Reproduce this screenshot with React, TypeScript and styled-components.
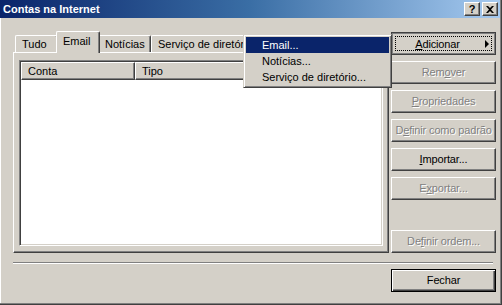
import styled, { createGlobalStyle, css } from 'styled-components';

const GlobalStyle = createGlobalStyle`
  html, body {
    margin: 0;
    padding: 0;
    background: #d4d0c8;
  }
  body {
    font-family: 'Liberation Sans', Arial, sans-serif;
    font-size: 11px;
    line-height: 13px;
    color: #000;
  }
`;

const face = '#d4d0c8';
const shadow = '#808080';
const dark = '#404040';

const Window = styled.div`
  position: relative;
  width: 502px;
  height: 305px;
  box-sizing: border-box;
  background: ${face};
  border-right: 1px solid ${dark};
  border-bottom: 1px solid ${dark};
  box-shadow: inset -1px -1px 0 ${shadow}, inset 1px 0 0 #fff;
  display: flex;
  flex-direction: column;
  overflow: hidden;
`;

const TitleBar = styled.div`
  height: 18px;
  margin-right: 1px;
  display: flex;
  align-items: center;
  padding: 0 2px 0 3px;
  background: linear-gradient(to right, #0a246a 0%, #3a6ea5 50%, #a6caf0 100%);
  color: #fff;
  font-weight: bold;
  font-size: 11px;
`;

const TitleText = styled.span`
  flex: 1;
  white-space: nowrap;
`;

const CaptionButtons = styled.div`
  display: flex;
  gap: 2px;
`;

const CaptionButton = styled.div`
  width: 16px;
  height: 14px;
  box-sizing: border-box;
  background: ${face};
  border: 1px solid;
  border-color: #fff ${dark} ${dark} #fff;
  box-shadow: inset -1px -1px 0 ${shadow};
  display: flex;
  align-items: center;
  justify-content: center;
  color: #000;
  font-weight: bold;
  font-size: 11px;
  line-height: 1;
`;

const Body = styled.div`
  flex: 1;
  display: flex;
  flex-direction: column;
  padding: 13px 5px 0 13px;
`;

const Main = styled.div`
  display: flex;
  gap: 2px;
`;

const LeftCol = styled.div`
  width: 376px;
  display: flex;
  flex-direction: column;
`;

const TabStrip = styled.div`
  height: 21px;
  display: flex;
  align-items: flex-end;
  padding-left: 2px;
`;

const Tab = styled.div<{ $w: number; $active?: boolean }>`
  position: relative;
  box-sizing: border-box;
  width: ${(p) => p.$w}px;
  height: 17px;
  padding: 2px 0 0 6px;
  white-space: nowrap;
  overflow: hidden;
  background: ${face};
  border-top: 1px solid #fff;
  border-left: 1px solid #fff;
  border-right: 1px solid ${dark};
  border-radius: 2px 2px 0 0;
  box-shadow: inset -1px 0 0 ${shadow};
  ${(p) =>
    p.$active &&
    css`
      z-index: 1;
      height: 22px;
      width: ${p.$w + 4}px;
      margin: 0 -2px -1px;
      padding-top: 3px;
    `}
`;

const Panel = styled.div`
  height: 201px;
  box-sizing: border-box;
  border-top: 1px solid #fff;
  border-left: 1px solid #fff;
  border-right: 1px solid ${dark};
  border-bottom: 1px solid ${dark};
  box-shadow: inset -1px -1px 0 ${shadow};
  padding: 7px 5px 5px 5px;
`;

const ListBox = styled.div`
  height: 186px;
  box-sizing: border-box;
  background: #fff;
  border: 1px solid;
  border-color: ${shadow} #fff #fff ${shadow};
  box-shadow: inset 1px 1px 0 ${dark}, inset -1px -1px 0 ${face};
  padding: 1px;
`;

const HeaderRow = styled.div`
  display: flex;
  height: 18px;
`;

const HeaderCell = styled.div<{ $w?: number }>`
  ${(p) => (p.$w ? `width: ${p.$w}px;` : 'flex: 1;')}
  box-sizing: border-box;
  background: ${face};
  border: 1px solid;
  border-color: #fff ${dark} ${dark} #fff;
  box-shadow: inset -1px -1px 0 ${shadow};
  padding: 2px 0 0 6px;
  white-space: nowrap;
`;

const RightCol = styled.div`
  width: 105px;
  display: flex;
  flex-direction: column;
  gap: 6px;
  padding-top: 1px;
`;

const Button = styled.div<{ $disabled?: boolean; $pressed?: boolean; $default?: boolean }>`
  position: relative;
  height: 23px;
  box-sizing: border-box;
  display: flex;
  align-items: center;
  justify-content: center;
  white-space: nowrap;
  letter-spacing: -0.15px;
  background: ${face};
  border: 1px solid;
  border-color: #fff ${dark} ${dark} #fff;
  box-shadow: inset -1px -1px 0 ${shadow};
  ${(p) =>
    p.$disabled &&
    css`
      color: ${shadow};
      text-shadow: 1px 1px 0 #fff;
    `}
  ${(p) =>
    p.$pressed &&
    css`
      border-color: ${dark};
      box-shadow: inset 1px 1px 0 ${shadow}, inset -1px -1px 0 ${shadow};
      padding: 2px 12px 0 0;
      &::after {
        content: '';
        position: absolute;
        inset: 3px;
        border: 1px dotted #000;
      }
    `}
  ${(p) =>
    p.$default &&
    css`
      border-color: #000;
      box-shadow: inset 1px 1px 0 #fff, inset -1px -1px 0 ${dark}, inset -2px -2px 0 ${shadow};
    `}
`;

const Arrow = styled.span`
  position: absolute;
  right: 6px;
  top: 7px;
  width: 0;
  height: 0;
  border-top: 4px solid transparent;
  border-bottom: 4px solid transparent;
  border-left: 4px solid #000;
`;

const Spacer = styled.div`
  flex: 1;
`;

const Separator = styled.div`
  margin: 9px 3px 0 0;
  height: 1px;
  background: ${shadow};
  border-bottom: 1px solid #fff;
`;

const Footer = styled.div`
  display: flex;
  justify-content: flex-end;
  margin-top: 5px;
`;

const FooterButton = styled(Button)`
  width: 105px;
`;

const Menu = styled.div`
  position: absolute;
  left: 243px;
  top: 34px;
  width: 149px;
  box-sizing: border-box;
  background: ${face};
  border: 1px solid;
  border-color: ${face} ${dark} ${dark} ${face};
  box-shadow: inset 1px 1px 0 #fff, inset -1px -1px 0 ${shadow};
  padding: 2px;
  z-index: 5;
`;

const MenuItem = styled.div<{ $hot?: boolean }>`
  height: 16px;
  display: flex;
  align-items: center;
  padding-left: 16px;
  white-space: nowrap;
  ${(p) =>
    p.$hot &&
    css`
      background: #0a246a;
      color: #fff;
    `}
`;

const U = styled.u`
  text-underline-offset: 1px;
`;

const tabs = [
  { label: 'Tudo', w: 43 },
  { label: 'Email', w: 40, active: true },
  { label: 'Notícias', w: 53 },
  { label: 'Serviço de diretório', w: 104 },
];

export default function App() {
  return (
    <>
      <GlobalStyle />
      <Window>
        <TitleBar>
          <TitleText>Contas na Internet</TitleText>
          <CaptionButtons>
            <CaptionButton>?</CaptionButton>
            <CaptionButton>
              <svg width="8" height="7" viewBox="0 0 8 7">
                <path d="M0 0h2l2 2 2-2h2L5 3.5 8 7H6L4 5 2 7H0l3-3.5z" fill="#000" />
              </svg>
            </CaptionButton>
          </CaptionButtons>
        </TitleBar>
        <Body>
          <Main>
            <LeftCol>
              <TabStrip>
                {tabs.map((t) => (
                  <Tab key={t.label} $w={t.w} $active={t.active}>
                    {t.label}
                  </Tab>
                ))}
              </TabStrip>
              <Panel>
                <ListBox>
                  <HeaderRow>
                    <HeaderCell $w={114}>Conta</HeaderCell>
                    <HeaderCell $w={120}>Tipo</HeaderCell>
                    <HeaderCell />
                  </HeaderRow>
                </ListBox>
              </Panel>
            </LeftCol>
            <RightCol>
              <Button $pressed>
                <span>
                  <U>A</U>dicionar
                </span>
                <Arrow />
              </Button>
              <Button $disabled>
                <span>
                  Rem<U>o</U>ver
                </span>
              </Button>
              <Button $disabled>
                <span>
                  <U>P</U>ropriedades
                </span>
              </Button>
              <Button $disabled>
                <span>
                  D<U>e</U>finir como padrão
                </span>
              </Button>
              <Button>
                <span>
                  <U>I</U>mportar...
                </span>
              </Button>
              <Button $disabled>
                <span>
                  E<U>x</U>portar...
                </span>
              </Button>
              <Spacer />
              <Button $disabled>
                <span>
                  De<U>f</U>inir ordem...
                </span>
              </Button>
            </RightCol>
          </Main>
          <Separator />
          <Footer>
            <FooterButton $default>Fechar</FooterButton>
          </Footer>
        </Body>
        <Menu>
          <MenuItem $hot>Email...</MenuItem>
          <MenuItem>Notícias...</MenuItem>
          <MenuItem>Serviço de diretório...</MenuItem>
        </Menu>
      </Window>
    </>
  );
}
